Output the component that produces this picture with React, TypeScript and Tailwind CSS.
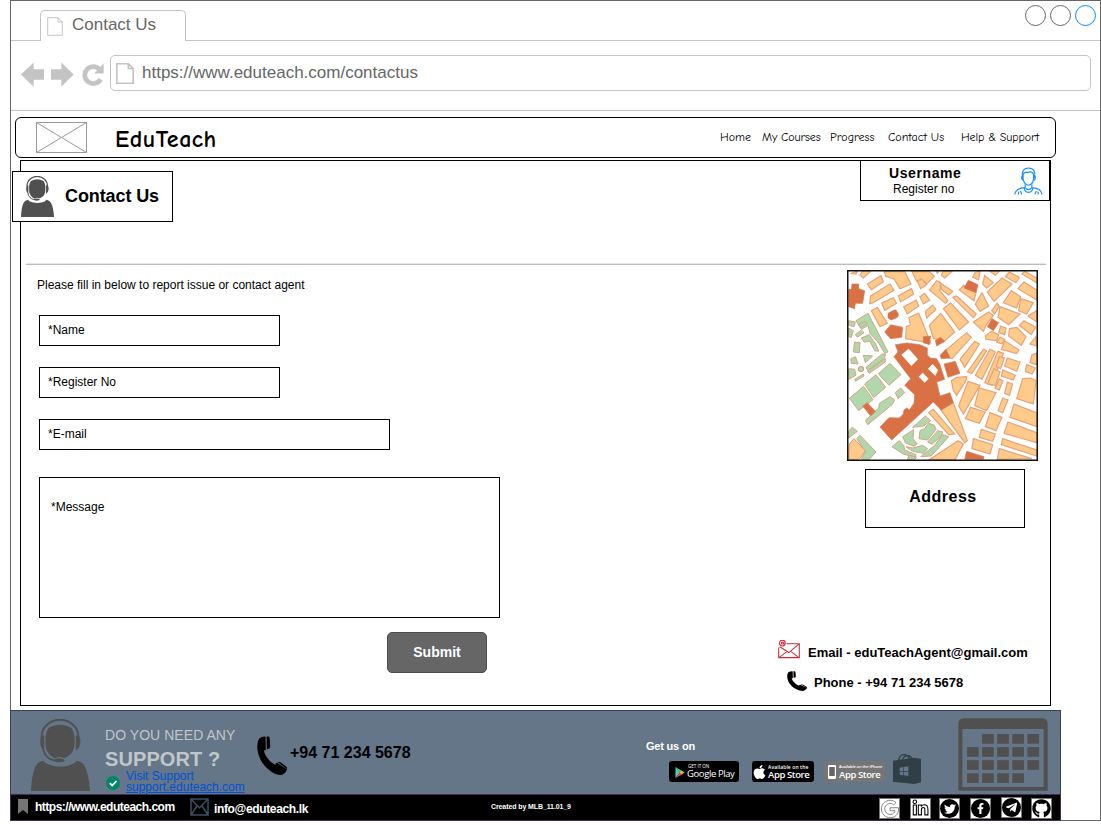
import React from "react";
import { FaApple, FaFacebookF, FaGithub, FaGoogle, FaLinkedinIn, FaTelegramPlane, FaTwitter } from "react-icons/fa";

const ORANGE = [
  "66,28 92,28 70,48 60,40", "82,66 123,41 130,59 94,83", "92,101 150,66 162,85 98,123 89,125",
  "133,29 194,29 213,66 180,80 162,51 137,43", "216,29 268,29 283,43 260,66 242,50 230,58",
  "232,58 246,52 260,68 242,80", "175,101 214,80 221,97 182,119", "125,123 160,107 170,124 134,145",
  "191,134 229,114 236,132 202,156", "94,146 112,136 142,184 120,194", "240,104 254,94 269,115 250,126",
  "256,148 278,129 288,142 260,168", "236,153 272,243 197,230 199,194 211,189 207,167",
  "309,28 336,28 314,48 304,40", "268,84 290,56 302,62 300,86 324,116 316,124", "302,64 338,88 326,99 304,82",
  "286,24 300,24 292,34", "268,190 302,154 344,210 310,240 280,228", "310,140 332,123 386,180 358,204",
  "338,106 350,102 409,156 400,167", "358,84 371,70 408,92 402,116",
  "406,30 420,28 416,54 398,46", "426,92 446,132 420,148 406,126", "434,40 460,62 440,78 428,66",
  "450,28 478,28 466,40", "486,48 516,66 462,118 442,90", "508,30 538,46 528,62 496,44",
  "554,28 590,48 590,62 546,36", "552,60 590,84 590,114 534,80", "514,86 542,104 530,138 490,122",
  "542,110 580,122 560,156 536,146", "480,134 540,156 506,188 474,166", "472,124 478,132 464,156 455,146",
  "400,180 446,150 460,160 438,190 430,208", "454,208 476,218 470,236 438,232 436,222", "482,192 498,198 494,218 476,212",
  "508,200 530,196 558,224 544,250 506,222", "552,176 587,196 574,218 538,190", "564,162 590,146 590,180",
  "470,240 480,226 494,232 486,246", "494,236 537,264 530,275 484,262", "588,224 590,252 570,246",
  "318,264 380,212 394,226 336,290 324,286", "360,292 404,238 418,246 374,316", "382,330 430,262 440,266 396,334",
  "406,340 450,262 466,270 426,352", "434,362 474,268 490,274 456,370", "478,284 493,288 482,320 469,314",
  "502,288 540,300 530,328 494,312", "488,324 526,340 520,354 484,342", "462,320 480,330 466,370 443,366",
  "478,350 489,356 478,384 465,378", "502,360 518,366 508,400 494,394", "560,308 586,318 576,336 556,328",
  "576,278 590,274 590,308 570,302", "548,350 572,348 588,356 580,426 530,410", "334,356 350,346 380,344 378,356 350,400 340,386",
  "384,358 420,370 370,456 356,432", "418,378 468,392 440,446 404,430", "488,408 504,414 488,452 474,446",
  "392,436 436,450 418,484 376,470", "450,452 486,466 468,506 436,494", "522,426 590,452 590,494 510,466",
  "504,480 590,512 590,542 492,514", "424,502 466,516 458,538 418,526", "400,530 458,548 450,576 396,560",
  "488,530 590,564 590,582 484,548", "478,560 576,590 472,592", "300,440 340,422 382,536 374,542",
  "280,442 344,516 326,518 266,452", "294,576 354,536 370,546 346,592 268,592", "42,30 52,28 48,36 34,34",
];
const GREEN = [
  "26,176 46,180 42,194 26,190", "26,198 40,206 34,226 26,224", "48,176 84,154 144,270 134,274 114,240 90,214 84,190 64,202",
  "64,228 88,218 108,248 116,268 104,266 90,238 72,240", "44,240 60,242 58,272 40,270", "46,218 64,204 72,212 52,226",
  "56,188 74,178 82,184 62,198", "70,280 98,282 76,302", "32,290 46,284 54,306 34,304",
  "78,316 126,276 136,276 134,288 84,326", "82,328 136,290 136,300 88,334", "26,320 44,322 48,340 26,352",
  "115,335 150,304 183,338 147,370", "74,366 108,338 137,376 101,407", "28,409 71,373 99,413 56,446",
  "166,392 182,378 194,392 174,410", "76,475 116,438 118,424 150,404 164,414 156,428 83,488", "44,352 70,336 72,342 46,358",
  "26,508 36,496 52,508 26,528", "50,530 60,520 108,570 88,592 64,592 76,568",
  "218,496 256,462 272,476 250,492", "188,524 221,503 219,530 232,546 221,553 196,542",
  "240,506 254,500 266,484 283,490 288,502 263,534 237,530", "263,540 293,506 308,510 304,522 276,547", "156,554 178,536 192,552 194,564 228,578 226,586 190,576",
  "198,554 218,558 248,550 263,560 250,574 218,568", "308,518 326,524 274,582 242,584 284,550", "208,580 230,586 224,592 202,592",
];
const BRICK = [
  "26,82 34,82 36,66 56,66 56,80 74,86 68,124 46,124 44,140 26,134", "385,55 414,68 408,92 372,78",
  "144,154 162,144 168,144 176,158 172,166 154,174 144,168", "134,210 152,188 188,196 185,226 152,230",
  "250,224 272,222 268,248 250,242", "286,236 302,226 314,238 290,252", "456,170 476,182 460,206 442,194",
  "166,248 200,243 240,248 262,258 262,278 270,288 290,290 300,308 314,352 290,360 300,402 330,392 340,422 304,444 280,420 155,534 120,495 147,467 178,468 190,456 192,444 200,438 208,444 222,424 224,398 194,370 212,350 162,284 174,270",
  "300,280 318,262 330,288 304,290", "312,306 346,298 360,334 324,346", "68,432 82,422 106,448 92,462", "380,568 432,584 430,592 374,592",
];

function CityMap() {
  return (
    <svg viewBox="21 24 573 573" className="block h-[191px] w-[191px]" aria-hidden>
      <rect x="21" y="24" width="573" height="573" fill="#fff" />
      <g fill="#ffca8a" stroke="#e5a277" strokeWidth="3.500">{ORANGE.map((p) => <polygon key={p} points={p} />)}</g>
      <g fill="#b1d8ac" stroke="#d3a585" strokeWidth="3">{GREEN.map((p) => <polygon key={p} points={p} />)}</g>
      <circle cx="63" cy="321" r="8" fill="#b1d8ac" stroke="#d39a75" strokeWidth="3" />
      <g fill="#d97145" stroke="#cf7c55" strokeWidth="2">{BRICK.map((p) => <polygon key={p} points={p} />)}</g>
      <polygon points="28,546 42,530 76,566 58,592 26,592" fill="#ffca8a" stroke="#e09a6c" strokeWidth="3" />
      <g fill="#fff">
        <polygon points="184,278 206,260 234,292 214,312" />
        <polygon points="264,320 278,306 294,324 286,342" />
        <polygon points="236,344 248,332 266,350 254,362" />
      </g>
      <rect x="23" y="26" width="569" height="569" fill="none" stroke="#111" strokeWidth="5" />
    </svg>
  );
}

function Agent({ className }: { className: string }) {
  return (
    <svg viewBox="92 56 179 216" className={className} preserveAspectRatio="none" fill="#505050" aria-hidden>
      <path d="M92 272 Q94 224 105 200 Q111 184 129 181 Q138 192 158 196 Q180 201 204 196 Q222 192 231 181 Q250 184 256 200 Q268 224 271 272Z" />
      <path d="M136 108 Q138 91 146 82 Q180 64 214 82 Q222 91 224 108 V132 Q222 158 204 168 Q196 174 190 173 Q180 167 164 174 Q150 168 141 153 Q136 142 136 132Z" />
      <path d="M124 110 A56 52 0 0 1 236 110" fill="none" stroke="#505050" strokeWidth="6" />
      <path d="M132 105 Q120 106 120 121 Q119 142 132 150Z M228 105 Q242 106 242 121 Q242 142 228 150Z" />
      <path d="M129 146 Q134 174 162 180" fill="none" stroke="#505050" strokeWidth="5" />
      <ellipse cx="177" cy="180" rx="17" ry="6" />
    </svg>
  );
}

function Handset({ className }: { className: string }) {
  return (
    <svg viewBox="772 107 88 117" className={className} preserveAspectRatio="none" aria-hidden>
      <path d="M778 115 Q786 108 797 109 L798 148 Q794 151 792 148 Q794 166 812 184 L826 194 Q825 189 830 187 L860 207 Q858 217 846 223 Q832 227 814 214 Q786 195 777 165 Q768 133 778 115Z M800 109 Q808 107 809 112 L811 140 Q810 146 801 147Z M832 185 Q838 183 845 189 L858 199 Q862 203 860 206Z" />
    </svg>
  );
}

function Page({ className, weight }: { className: string; weight: number }) {
  return (
    <svg viewBox="0 0 16 19" className={className} preserveAspectRatio="none" fill="none" stroke="#c4c4c4" strokeWidth={weight} aria-hidden>
      <path d="M.7 .7H11L15.300 5V18.300H.7Z M11 .7V5H15.300" />
    </svg>
  );
}

function Envelope() {
  return (
    <svg viewBox="53 62 65 56" className="h-[19px] w-[22px]" fill="none" stroke="#cf2a38" strokeWidth="3" aria-hidden>
      <path d="M78 73H116V114H55V84 M58 82 L85 99 L114 75 M57 113L79 96 M114 113L92 96" />
      <circle cx="66" cy="71" r="8.500" /><circle cx="66" cy="71" r="3" /><path d="M70 67V74L74 74" />
    </svg>
  );
}

function Person() {
  return (
    <svg viewBox="943 503 86 83" className="h-[28px] w-[29px]" fill="none" stroke="#1a8fff" strokeWidth="3.500" aria-hidden>
      <path d="M969 535 Q963 507 986 506 Q1009 507 1004 535 M970 526 Q974 516 983 519 Q998 514 1001 526 V539 Q998 556 986 557 Q974 556 970 539Z M968 527 Q963 535 969 543 M1004 527 Q1009 535 1003 543" />
      <path d="M976 555V564Q986 576 996 564V555 M973 564 Q974 578 986 578 Q998 578 999 564 M945 584 Q948 566 975 564 M1026 584 Q1024 566 997 564 M956 584L957 576 M962 574L966 584 M1015 584L1014 576 M1009 574L1005 584" />
    </svg>
  );
}

function Calendar() {
  const cells: [number, number][] = [];
  for (let r = 0; r < 4; r++) for (let c = 0; c < 5; c++) if (!(r === 0 && c === 0) && !(r === 3 && c === 4)) cells.push([c, r]);
  return (
    <svg viewBox="984 39 270 219" className="h-[73px] w-[90px]" fill="#505050" aria-hidden>
      <path fillRule="evenodd" d="M985 257V54Q987 41 1000 40H1238Q1251 41 1253 54V257Z M997 72V246H1241V72Z" />
      {cells.map(([c, r]) => <rect key={`${c}-${r}`} x={1011 + c * 45.300} y={87 + r * 39.300} width="35" height="29" />)}
    </svg>
  );
}

function Reload() {
  return (
    <svg viewBox="246 189 65 68" className="h-[23px] w-[22px]" aria-hidden>
      <path d="M301 237 A25 25 0 1 1 298 208" fill="none" stroke="#c4c4c4" strokeWidth="14" />
      <path d="M310 190V220H282Z" fill="#c4c4c4" />
    </svg>
  );
}

const comic = "font-['Comic_Sans_MS','Comic_Neue',Lato,sans-serif]";

function Field({ label, className }: { label: string; className: string }) {
  return <label className={`flex h-[31px] items-center border border-black pb-[2px] pl-2 text-[12px] ${className}`}>{label}</label>;
}

function Social({ children }: { children: React.ReactNode }) {
  return <span className="flex h-[21px] w-[21px] items-center justify-center border border-[#777] bg-white">{children}</span>;
}

function Disc({ children }: { children: React.ReactNode }) {
  return <span className="flex h-[19px] w-[19px] shrink-0 items-center justify-center rounded-full bg-black">{children}</span>;
}

export default function App() {
  return (
    <div className="h-[825px] w-[1101px] overflow-hidden bg-white pl-[10px] font-['Liberation_Sans',Arial,sans-serif] leading-none text-black">
      <div className="flex h-[821px] w-[1091px] flex-col border border-[#666]">
        <div className="flex h-[40px] shrink-0 items-end">
          <div className="h-px w-[29px] bg-[#c4c4c4]" />
          <div className="flex h-[31px] w-[146px] rounded-t-[5px] border border-b-0 border-[#c4c4c4] pl-[6px] pt-[5px] text-[17px] text-[#666]">
            <Page className="mt-px h-[19px] w-[16px] shrink-0" weight={1} />
            <span className="ml-[9px] whitespace-nowrap">Contact Us</span>
          </div>
          <div className="flex h-full flex-1 justify-end gap-[4px] border-b border-[#c4c4c4] pr-[4px] pt-[4px]">
            <span className="h-[21px] w-[21px] rounded-full border border-[#666]" />
            <span className="h-[21px] w-[21px] rounded-full border border-[#666]" />
            <span className="h-[21px] w-[21px] rounded-full border border-[#008cff]" />
          </div>
        </div>
        <div className="flex h-[70px] shrink-0 items-start border-b border-[#c4c4c4] pl-[10px] pt-[14px]">
          <svg viewBox="63 186 159 74" className="mt-[7px] h-[25px] w-[53px]" fill="#c4c4c4" aria-hidden>
            <path d="M63 223L101 187V207H132V239H101V260Z M221 223L184 187V207H153V239H184V260Z" />
          </svg>
          <span className="ml-[8px] mt-[8px]"><Reload /></span>
          <div className="ml-[6px] flex h-[36px] w-[981px] rounded-[5px] border border-[#c4c4c4] pl-[5px] pt-[7px] text-[17px] text-[#666]">
            <Page className="h-[21px] w-[18px] shrink-0" weight={1.5} />
            <span className="ml-[8px] mt-px whitespace-nowrap">https://www.eduteach.com/contactus</span>
          </div>
        </div>

        <nav className={`ml-[4px] mt-[6px] flex h-[41px] w-[1041px] shrink-0 items-center rounded-[6px] border border-black ${comic}`}>
          <svg viewBox="0 0 51 31" className="ml-[20px] h-[31px] w-[51px]" fill="none" stroke="#999" aria-hidden>
            <path d="M.5 .5H50.500V30.500H.5Z M.5 .5L50.500 30.500 M50.500 .5L.5 30.500" />
          </svg>
          <span className="ml-[28px] mt-[2px] w-[605px] text-[24px] font-bold tracking-[0.5px]">EduTeach</span>
          <div className="-mt-px flex whitespace-nowrap text-[12px]">
            <span className="w-[42px]">Home</span>
            <span className="w-[68px] tracking-[-0.15px]">My Courses</span>
            <span className="w-[58px]">Progress</span>
            <span className="w-[73px]">Contact Us</span>
            <span className="tracking-[-0.1px]">Help &amp; Support</span>
          </div>
        </nav>

        <main className="ml-[9px] mt-[2px] flex h-[546px] w-[1031px] shrink-0 flex-col border border-black">
          <div className="flex h-[102px] shrink-0 items-start justify-between">
            <div className="-ml-[9px] mt-[10px] flex h-[51px] w-[161px] border border-black bg-white pl-[8px] pt-[4px]">
              <Agent className="h-[41px] w-[33px]" />
              <h1 className="ml-[11px] mt-[11px] text-[18px] font-bold tracking-[-0.1px]">Contact Us</h1>
            </div>
            <div className="-mt-px flex h-[41px] w-[190px] border border-black">
              <div className="w-[126px] pl-[28px] pt-[5px]">
                <div className="text-[14px] font-bold tracking-[0.6px]">Username</div>
                <div className="ml-[4px] mt-[3px] whitespace-nowrap text-[12px]">Register no</div>
              </div>
              <span className="ml-[27px] mt-[6px]"><Person /></span>
            </div>
          </div>
          <div className="ml-[5px] h-[2px] w-[1020px] shrink-0 border-t border-[#e6e6e6] bg-[#bcbcbc]" />
          <div className="flex justify-between">
            <form className="flex w-[479px] flex-col pl-[18px] pt-[14px]">
              <p className="-ml-[2px] mb-[24px] text-[12px]">Please fill in below to report issue or contact agent</p>
              <Field label="*Name" className="mb-[21px] w-[241px]" />
              <Field label="*Register No" className="mb-[21px] w-[241px]" />
              <Field label="*E-mail" className="mb-[27px] w-[351px]" />
              <label className="h-[141px] w-[461px] border border-black pl-[11px] pt-[23px] text-[12px]">*Message</label>
              <button type="button" className="mr-[13px] mt-[14px] h-[41px] w-[100px] self-end rounded-[5px] border border-[#4d4d4d] bg-[#666] pb-[2px] text-[14px] font-bold text-white">Submit</button>
            </form>
            <aside className="flex w-[293px] flex-col pt-[5px]">
              <div className="ml-[90px]"><CityMap /></div>
              <div className="ml-[108px] mt-[8px] flex h-[59px] w-[160px] justify-center border border-black pr-[4px] pt-[19px] text-[16px] font-bold tracking-[0.5px]">Address</div>
              <div className="ml-[21px] mt-[112px] flex text-[13px] font-bold">
                <Envelope />
                <span className="ml-[8px] mt-[6px] whitespace-nowrap">Email - eduTeachAgent@gmail.com</span>
              </div>
              <div className="ml-[30px] mt-[12px] flex text-[13px] font-bold">
                <Handset className="h-[20px] w-[20px]" />
                <span className="ml-[7px] mt-[5px] whitespace-nowrap">Phone - +94 71 234 5678</span>
              </div>
            </aside>
          </div>
        </main>

        <footer className="-ml-px mt-[4px] w-[1051px] shrink-0">
          <div className="flex h-[84px] border border-b-0 border-[#314354] bg-[#647687]">
            <Agent className="ml-[20px] mt-[8px] h-[72px] w-[59px] shrink-0" />
            <div className="ml-[15px] w-[146px] shrink-0 whitespace-nowrap pt-[17px] text-[#c2c6ca]">
              <div className="text-[14px] tracking-[0.05px]">DO YOU NEED ANY</div>
              <div className="mt-[7px] text-[20px] font-bold tracking-[0.1px]">SUPPORT ?</div>
              <div className="mt-[2px] flex text-[12px] leading-[11px] text-[#0050d8]">
                <svg viewBox="0 0 14 14" className="ml-px mt-[5px] h-[14px] w-[14px]" aria-hidden>
                  <circle cx="7" cy="7" r="7" fill="#008765" /><path d="M3.800 7.200L6.200 9.500L10.500 5" fill="none" stroke="#fff" strokeWidth="1.800" />
                </svg>
                <div className="ml-[6px]"><div>Visit Support</div><div className="underline">support.eduteach.com</div></div>
              </div>
            </div>
            <Handset className="ml-[6px] mt-[25px] h-[39px] w-[30px] shrink-0" />
            <span className="ml-[3px] mt-[34px] w-[356px] shrink-0 text-[16px] font-bold">+94 71 234 5678</span>
            <div className="w-[312px] shrink-0 pt-[30px] text-white">
              <div className="text-[11px] font-bold tracking-[-0.2px]">Get us on</div>
              <div className="ml-[23px] mt-[2px] flex items-end whitespace-nowrap font-['Open_Sans',sans-serif]">
                <div className="flex h-[21px] w-[70px] items-center rounded-[3px] bg-black pl-[6px]">
                  <svg viewBox="0 0 10 12" className="mt-[2px] h-[11px] w-[10px]" aria-hidden>
                    <path d="M0 0L5 6L0 12Z" fill="#43d3c0" /><path d="M0 0L8 4.500L5.500 6.500Z" fill="#7cc66b" /><path d="M0 12L8 7.500L5.500 5.500Z" fill="#ef4c55" /><path d="M7 4L10 6L7 8L5 6Z" fill="#f4b63f" />
                  </svg>
                  <div className="-mt-px ml-[2px]"><div className="pl-[1px] text-[4.500px] leading-[5px]">GET IT ON</div><div className="text-[9.500px] font-medium leading-[10px] tracking-[-0.4px]">Google Play</div></div>
                </div>
                <div className="ml-[13px] flex h-[21px] w-[62px] items-center rounded-[3px] bg-black pl-[1px]">
                  <FaApple className="h-[16px] w-[13px] shrink-0" />
                  <div className="ml-[2px]"><div className="text-[5px] font-semibold leading-[6px] tracking-[0.1px]">Available on the</div><div className="text-[9.500px] font-semibold leading-[9px] tracking-[-0.4px]">App Store</div></div>
                </div>
                <div className="ml-[10px] flex h-[21px] w-[61px] items-center rounded-[3px] bg-[#757575] pl-[4px]">
                  <svg viewBox="0 0 8 14" className="h-[14px] w-[8px] shrink-0" aria-hidden><rect width="8" height="14" rx="1.200" fill="#fff" /><rect x="1.200" y="2" width="5.600" height="9" fill="#666" /></svg>
                  <div className="ml-[3px]"><div className="text-[4px] font-semibold leading-[6px] tracking-[-0.100px]">Available on the iPhone</div><div className="text-[9.500px] font-semibold leading-[9px] tracking-[-0.4px]">App Store</div></div>
                </div>
                <svg viewBox="786 147 84 90" className="-mb-[2px] ml-[8px] h-[30px] w-[28px]" aria-hidden>
                  <path d="M786 167L850 158V237L786 230Z M850 158L870 162V232L850 237Z" fill="#303e45" />
                  <path d="M803 166Q806 148 821 149Q834 151 835 166 M814 164Q820 151 832 152Q841 154 843 164" fill="none" stroke="#303e45" strokeWidth="4" />
                  <path d="M806 188L817 186V198H806Z M819 186L832 184V198H819Z M806 200H817V211L806 209Z M819 200H832V213L819 211Z" fill="#647687" />
                </svg>
              </div>
            </div>
            <span className="mt-[7px]"><Calendar /></span>
          </div>
          <div className="flex h-[27px] whitespace-nowrap border border-[#432d57] bg-black text-[12px] font-bold text-white">
            <svg viewBox="0 0 10 15" className="ml-[7px] mt-[4px] h-[15px] w-[10px] shrink-0" aria-hidden><path d="M0 0H10V15L5 11L0 15Z" fill="#757575" /></svg>
            <span className="ml-[7px] mt-[6px] w-[155px] shrink-0 tracking-[-0.5px]">https://www.eduteach.com</span>
            <svg viewBox="0 0 19 18" className="mt-[3px] h-[18px] w-[19px] shrink-0" fill="none" stroke="#3b4f61" strokeWidth="1.500" aria-hidden><path d="M1 1H18V17H1Z M1 1L9.500 10L18 1 M1 17L7 8 M18 17L12 8" /></svg>
            <span className="ml-[5px] mt-[8px] w-[277px] shrink-0 tracking-[-0.35px]">info@eduteach.lk</span>
            <span className="mt-[8px] w-[388px] shrink-0 text-[7px] tracking-[-0.1px]">Created by MLB_11.01_9</span>
            <div className="flex pt-[3px]">
              <Social><FaGoogle className="h-[18px] w-[18px] overflow-visible fill-white stroke-[#777] stroke-[25px]" /></Social>
              <span className="ml-[10px]"><Social><FaLinkedinIn className="h-[17px] w-[17px] overflow-visible fill-white stroke-black stroke-[32px]" /></Social></span>
              <span className="ml-[8px]"><Social><Disc><FaTwitter className="h-[12px] w-[12px]" /></Disc></Social></span>
              <span className="ml-[10px]"><Social><Disc><FaFacebookF className="h-[11px] w-[11px]" /></Disc></Social></span>
              <span className="-mt-px ml-[10px]"><Social><Disc><FaTelegramPlane className="h-[13px] w-[13px]" /></Disc></Social></span>
              <span className="ml-[9px]"><Social><FaGithub className="h-[19px] w-[19px] text-black" /></Social></span>
            </div>
          </div>
        </footer>
      </div>
    </div>
  );
}
